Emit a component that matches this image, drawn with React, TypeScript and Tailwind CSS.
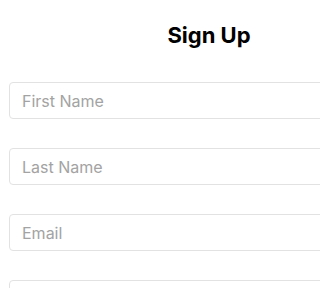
export default function App() {
  const fields = ["First Name", "Last Name", "Email", "Password"]
  return (
    <div className="w-full h-[288px] bg-white overflow-hidden" style={{ fontFamily: "Inter, 'Noto Sans', sans-serif" }}>
      <div className="w-[400px] ml-[9px] pt-[21px]">
        <h2 className="text-center text-[22px] leading-[28px] font-bold text-black">Sign Up</h2>
        <form className="mt-[33px] flex flex-col gap-[29px]">
          {fields.map((f) => (
            <input
              key={f}
              type={f === "Password" ? "password" : "text"}
              placeholder={f}
              className="h-[37px] w-full rounded border border-[#e2e2e2] px-3 text-base text-black placeholder:text-[#a3a3a3] outline-none"
            />
          ))}
        </form>
      </div>
    </div>
  )
}
